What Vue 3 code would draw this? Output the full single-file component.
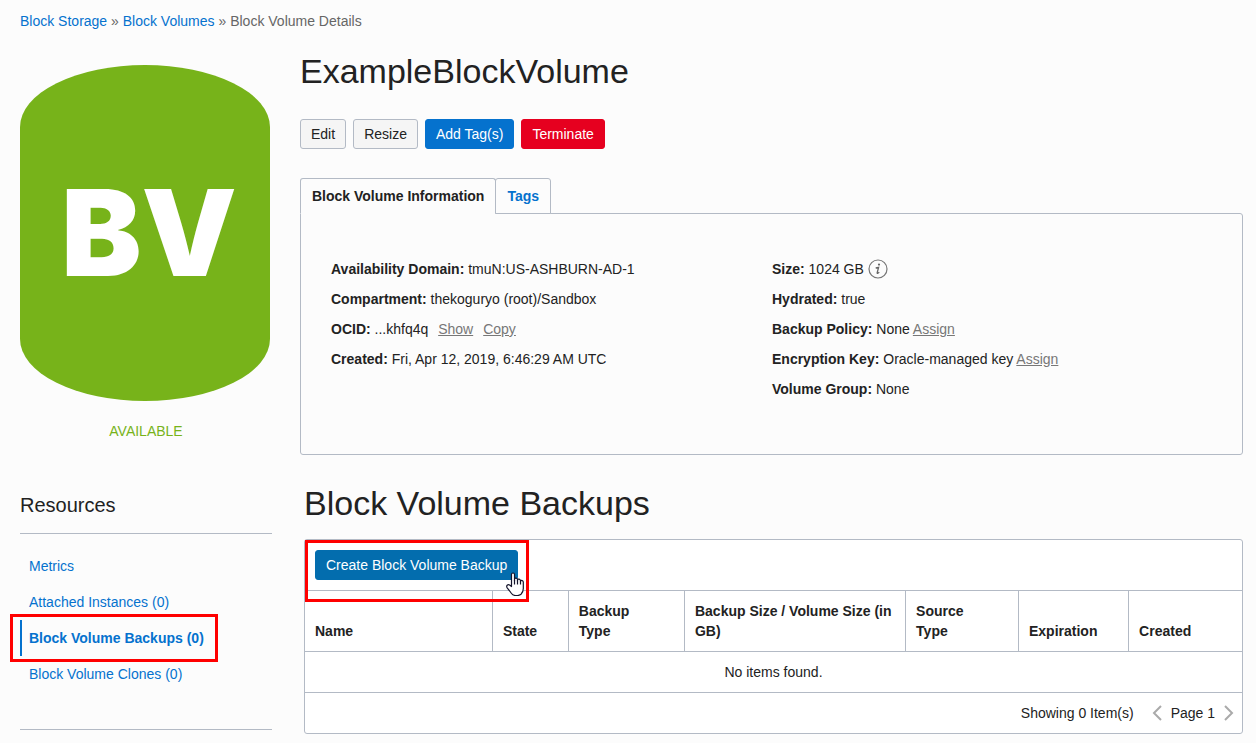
<script setup>
const leftFacts = [
  { label: 'Availability Domain', value: 'tmuN:US-ASHBURN-AD-1' },
  { label: 'Compartment', value: 'thekoguryo (root)/Sandbox' },
  { label: 'OCID', value: '...khfq4q', actions: ['Show', 'Copy'] },
  { label: 'Created', value: 'Fri, Apr 12, 2019, 6:46:29 AM UTC' },
]
const rightFacts = [
  { label: 'Size', value: '1024 GB', info: true },
  { label: 'Hydrated', value: 'true' },
  { label: 'Backup Policy', value: 'None', link: 'Assign' },
  { label: 'Encryption Key', value: 'Oracle-managed key', link: 'Assign' },
  { label: 'Volume Group', value: 'None' },
]
const resources = [
  { label: 'Metrics' },
  { label: 'Attached Instances (0)' },
  { label: 'Block Volume Backups (0)', active: true },
  { label: 'Block Volume Clones (0)' },
]
const columns = [
  { title: 'Name', width: '20%' },
  { title: 'State', width: '8.1%' },
  { title: 'Backup\nType', width: '12.4%' },
  { title: 'Backup Size / Volume Size (in GB)', width: '23.6%' },
  { title: 'Source\nType', width: '12.05%' },
  { title: 'Expiration', width: '11.75%' },
  { title: 'Created', width: '12.1%' },
]
</script>

<template>
  <div class="page">
    <nav class="crumbs" aria-label="Breadcrumb">
      <a href="#">Block Storage</a> » <a href="#">Block Volumes</a> » <span>Block Volume Details</span>
    </nav>

    <div class="columns">
      <aside class="side">
        <div class="badge">BV</div>
        <p class="status">AVAILABLE</p>
        <h2 class="side-title">Resources</h2>
        <ul class="resources">
          <li v-for="r in resources" :key="r.label" :class="{ active: r.active }">
            <a href="#">{{ r.label }}</a>
            <span v-if="r.active" class="mark nav-mark"></span>
          </li>
        </ul>
      </aside>

      <main class="main">
        <h1 class="title">ExampleBlockVolume</h1>
        <div class="actions">
          <button type="button" class="btn">Edit</button>
          <button type="button" class="btn">Resize</button>
          <button type="button" class="btn primary">Add Tag(s)</button>
          <button type="button" class="btn danger">Terminate</button>
        </div>

        <div class="tabs" role="tablist">
          <button type="button" role="tab" aria-selected="true" class="tab current">Block Volume Information</button>
          <button type="button" role="tab" aria-selected="false" class="tab">Tags</button>
        </div>
        <section class="panel">
          <div class="facts">
            <div v-for="f in leftFacts" :key="f.label" class="fact">
              <b>{{ f.label }}:</b> {{ f.value }}
              <a v-for="a in f.actions" :key="a" href="#" class="spaced">{{ a }}</a>
            </div>
          </div>
          <div class="facts">
            <div v-for="f in rightFacts" :key="f.label" class="fact">
              <b>{{ f.label }}:</b> {{ f.value }}
              <a v-if="f.link" href="#">{{ f.link }}</a>
              <svg v-if="f.info" class="info" viewBox="0 0 20 20" role="img" aria-label="Information">
                <circle cx="10" cy="10" r="9" fill="none" stroke="#777" stroke-width="1.2" />
                <circle cx="11" cy="5.6" r="1.1" fill="#666" />
                <path d="M7.700 9 10.600 8.400 9.200 13.600q-.2 1.100.6.7l1.500-1" fill="none" stroke="#666" stroke-width="1.3" />
              </svg>
            </div>
          </div>
        </section>

        <section class="backups">
          <h2 class="title">Block Volume Backups</h2>
          <div class="grid-box">
            <div class="toolbar">
              <button type="button" class="btn create">Create Block Volume Backup</button>
              <span class="mark tool-mark"></span>
              <svg class="pointer" viewBox="0 0 18 24" aria-hidden="true">
                <path
                  d="M5.5 14.5V2.6Q5.5 1 7 1T8.5 2.6V8.8L8.5 7Q9 5.9 10.2 6.2T11.5 7.5V9L11.5 7.8Q12 6.8 13.1 7.1T14.5 8.5V10L14.5 9Q15.2 8.2 16.2 8.6T17.3 10V16.5Q17.3 20 15 22.2Q13.5 23.5 11.5 23.5H9.5Q7 23.5 5.5 21.5L1.2 15.8Q.2 14.3 1.2 13.2Q2.3 12.2 3.6 13.1Z"
                  fill="#fff" stroke="#14142b" stroke-width="1.2" stroke-linejoin="round"
                />
                <path d="M8.5 8v4.500M11.5 8.500v4M14.5 9.500v3" fill="none" stroke="#14142b" stroke-width="1.2" />
              </svg>
            </div>
            <table>
              <colgroup>
                <col v-for="c in columns" :key="c.title" :style="{ width: c.width }" />
              </colgroup>
              <thead>
                <tr>
                  <th v-for="c in columns" :key="c.title" scope="col">{{ c.title }}</th>
                </tr>
              </thead>
              <tbody>
                <tr>
                  <td :colspan="columns.length">No items found.</td>
                </tr>
              </tbody>
            </table>
            <div class="pager">
              <span class="count">Showing 0 Item(s)</span>
              <button type="button" class="arrow" aria-label="Previous page">
                <svg viewBox="0 0 10 16"><path d="M9 1 2 8l7 7" /></svg>
              </button>
              <span>Page 1</span>
              <button type="button" class="arrow" aria-label="Next page">
                <svg viewBox="0 0 10 16"><path d="m1 1 7 7-7 7" /></svg>
              </button>
            </div>
          </div>
        </section>
      </main>
    </div>
  </div>
</template>

<style>
body {
  margin: 0;
  background: #fcfcfc;
}
</style>

<style scoped>
.page {
  padding: 11px 13px 9px 20px;
  font: 14px/20px "Liberation Sans", Arial, sans-serif;
  color: #222;
}
.page * {
  box-sizing: border-box;
}
a {
  color: #0572ce;
  text-decoration: none;
}
.crumbs {
  color: #666;
}
.columns {
  display: flex;
  gap: 28px;
}
.side {
  flex: 0 0 252px;
  padding-top: 34px;
}
.badge {
  width: 250px;
  height: 336px;
  padding-left: 8px;
  border-radius: 125px / 62px;
  background: #77b31a;
  color: #fff;
  font: 900 120px/336px Inter, "Liberation Sans", sans-serif;
  text-align: center;
}
.status {
  margin: 20px 0 0;
  color: #77b31a;
  text-align: center;
}
.side-title {
  margin: 52px 0 0;
  padding-bottom: 16px;
  border-bottom: 1px solid #b3bac5;
  font-size: 20px;
  line-height: 24px;
  font-weight: 400;
}
.resources {
  margin: 0;
  padding: 14px 0 37px;
  border-bottom: 1px solid #b3bac5;
  list-style: none;
}
.resources li {
  position: relative;
  padding-left: 7px;
  border-left: 2px solid transparent;
  line-height: 36px;
}
.resources .active {
  border-left-color: #0572ce;
  font-weight: 700;
}
.mark {
  position: absolute;
  border: 3px solid #f00;
  pointer-events: none;
}
.nav-mark {
  top: -6px;
  left: -12px;
  width: 208px;
  height: 48px;
}
.main {
  flex: 1;
  min-width: 0;
  padding-top: 20px;
}
.title {
  margin: 0;
  font-size: 34px;
  line-height: 40px;
  font-weight: 400;
}
.actions {
  display: flex;
  gap: 7px;
  margin: 28px 0 29px;
}
.btn {
  height: 30px;
  padding: 0 10px;
  border: 1px solid #b3bac5;
  border-radius: 3px;
  background: #f5f5f5;
  color: #222;
  font: inherit;
}
.primary {
  border-color: #0572ce;
  background: #0572ce;
  color: #fff;
}
.danger {
  border-color: #e6001f;
  background: #e6001f;
  color: #fff;
}
.create {
  border-color: #036dae;
  background: #036dae;
  color: #fff;
}
.tabs {
  position: relative;
  display: flex;
}
.tab {
  height: 36px;
  padding: 0 11px;
  border: 1px solid #b3bac5;
  border-radius: 3px 3px 0 0;
  background: #fcfcfc;
  color: #0572ce;
  font: inherit;
  font-weight: 700;
}
.tab + .tab {
  margin-left: -1px;
}
.current {
  border-bottom-color: #fcfcfc;
  color: #222;
}
.panel {
  display: grid;
  grid-template-columns: 441px 1fr;
  margin-top: -1px;
  padding: 40px 30px 50px;
  border: 1px solid #b3bac5;
  border-radius: 0 3px 3px 3px;
}
.fact {
  line-height: 30px;
}
.fact a {
  color: #777;
  text-decoration: underline;
}
.fact .spaced {
  margin: 0 4px 0 6px;
}
.info {
  width: 20px;
  height: 20px;
  margin-bottom: 2px;
  vertical-align: middle;
}
.backups {
  padding: 28px 0 0 4px;
}
.grid-box {
  margin-top: 16px;
  border: 1px solid #b3bac5;
  border-radius: 3px;
  background: #fff;
}
.toolbar {
  position: relative;
  padding: 10px;
}
.tool-mark {
  top: 0;
  left: 0;
  width: 224px;
  height: 62px;
}
.pointer {
  position: absolute;
  top: 32px;
  left: 201px;
  width: 18px;
  height: 24px;
}
table {
  width: 100%;
  table-layout: fixed;
  border-collapse: collapse;
}
th {
  padding: 10px;
  border: 1px solid #b3bac5;
  text-align: left;
  vertical-align: bottom;
  white-space: pre-line;
}
th:first-child {
  border-left: 0;
}
th:last-child {
  border-right: 0;
}
td {
  padding: 10px;
  border-bottom: 1px solid #b3bac5;
  text-align: center;
}
.pager {
  display: flex;
  justify-content: flex-end;
  align-items: center;
  gap: 9px;
  padding: 10px 8px;
}
.count {
  margin-right: 9px;
}
.arrow {
  width: 10px;
  height: 16px;
  padding: 0;
  border: 0;
  background: none;
}
.arrow svg {
  display: block;
}
.arrow path {
  fill: none;
  stroke: #aaa;
  stroke-width: 2;
}
</style>
